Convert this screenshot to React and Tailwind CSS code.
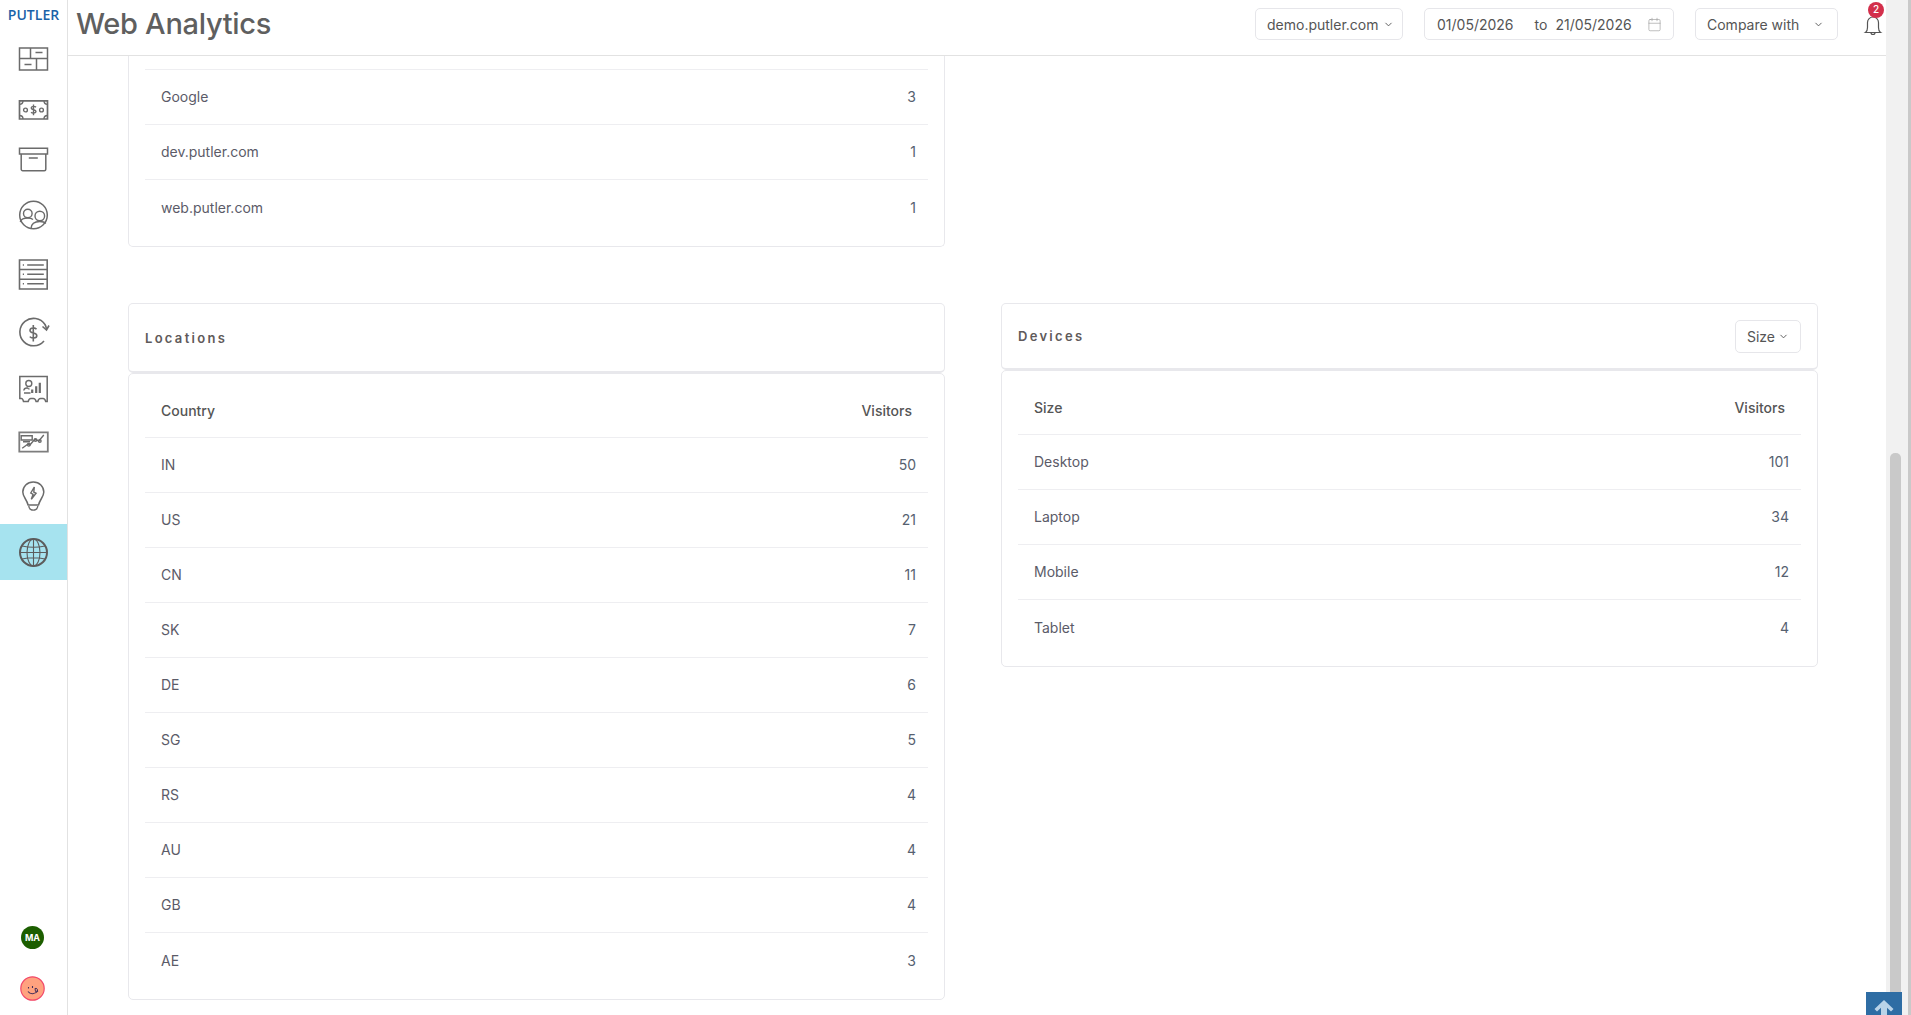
import React from "react";
import { ChevronDown, Calendar } from "lucide-react";

const font = { fontFamily: "Inter, sans-serif" };

const referrers = [
  ["Google", 3],
  ["dev.putler.com", 1],
  ["web.putler.com", 1],
];
const countries = [
  ["IN", 50],
  ["US", 21],
  ["CN", 11],
  ["SK", 7],
  ["DE", 6],
  ["SG", 5],
  ["RS", 4],
  ["AU", 4],
  ["GB", 4],
  ["AE", 3],
];
const devices = [
  ["Desktop", 101],
  ["Laptop", 34],
  ["Mobile", 12],
  ["Tablet", 4],
];

const NavIcon = ({ children, active, h }) => (
  <div className={`flex items-center justify-center ${h} ${active ? "bg-[#a6e3ef]" : ""}`}>
    <svg width="32" height="32" viewBox="0 0 32 32" fill="none" stroke="#6b6b6b" strokeWidth="1.4">
      {children}
    </svg>
  </div>
);

const Sidebar = () => (
  <aside className="w-[68px] shrink-0 border-r border-[#e2e2e2] flex flex-col bg-white">
    <div className="h-[30px] pt-[5px] text-center text-[14px] leading-[20px] font-semibold text-[#1a62a8]" style={{ fontFamily: "'Open Sans', sans-serif" }}>
      PUTLER
    </div>
    <NavIcon h="h-[57px]">
      <path d="M1.500 5h28v22h-28zM1.500 15.500h28M12.500 5v10.500M18.500 15.500V27M17.500 9.500h7M6.500 21.500h7" strokeWidth="1.500" />
    </NavIcon>
    <NavIcon h="h-[46px]">
      <path d="M1.500 6.800h28v18.200h-28z" strokeWidth="1.700" />
      <path d="M1.500 10.300c2 0 3.500-1.500 3.500-3.500M29.500 10.300c-2 0-3.500-1.500-3.500-3.500M1.500 21.500c2 0 3.500 1.500 3.500 3.500M29.500 21.500c-2 0-3.500 1.500-3.500 3.500" />
      <circle cx="7.500" cy="16" r="1.900" />
      <circle cx="23.500" cy="16" r="1.900" />
      <path d="M18 13.200c-1-1.200-4.800-1.200-4.800.8 0 2.400 4.800 1 4.800 3.400 0 2-3.900 2-4.900.8M15.500 10.500v10.800" />
    </NavIcon>
    <NavIcon h="h-[54px]">
      <path d="M1.500 4.300h28v5.700h-28zM3.200 10v15.200a1.500 1.500 0 0 0 1.500 1.500h21.600a1.500 1.500 0 0 0 1.500-1.500V10M10.800 14h9" strokeWidth="1.500" />
    </NavIcon>
    <NavIcon h="h-[58px]">
      <circle cx="15.500" cy="15" r="13.800" strokeWidth="1.500" />
      <circle cx="9.800" cy="13.500" r="4.300" />
      <circle cx="21.800" cy="16" r="4.800" />
      <path d="M2.300 22c.5-2.500 3-4 7.500-4 2.300 0 4 .5 5.200 1.500M13 28.500c.3-4.500 3.500-7 8.800-7 3 0 5 .8 6 2" />
    </NavIcon>
    <NavIcon h="h-[58px]">
      <path d="M1.500 2h27.700v29h-27.700zM1.500 11.500h27.700M1.500 21.200h27.700" strokeWidth="1.600" />
      <path d="M9.200 7h16.600M9.200 16.200h16.600M9.200 25.800h16.600" strokeWidth="1.500" />
      <path d="M4.800 7h1.200M4.800 16.200h1.200M4.800 25.800h1.200" />
    </NavIcon>
    <NavIcon h="h-[60px]">
      <path d="M26 24a13.700 13.700 0 1 1 1-16.500 13.700 13.700 0 0 1 1.500 4.500" strokeWidth="1.600" />
      <path d="M24.500 9.500l4 3.500 2.500-4.500" strokeWidth="1.600" />
      <path d="M18.500 12.300c-1.500-2-6.500-2-6.500 1.200 0 3.500 6.800 1.600 6.800 5.200 0 3-5.500 3-7 .9M15.300 8v16.500" strokeWidth="1.600" />
    </NavIcon>
    <NavIcon h="h-[52px]">
      <path d="M1.800 3.500h27.400v25h-1.500c-.5-2-1.200-3-2.700-3h-2.500c-1.500 0-2.200 1-2.700 3h-1.700c-.5-2-1.200-3-2.700-3h-2.500c-1.500 0-2.200 1-2.700 3H5.500c-.5-2-1.200-3-2-3h-1.700z" strokeWidth="1.500" />
      <circle cx="10.800" cy="10.500" r="3" />
      <path d="M6 20h6.500M5.800 17.500c.3-2 2-2.700 3.700-2.500.5.800 1 1 2 1" />
      <path d="M14.200 20v-3.500M18.200 20v-6.800M21.800 20V9.800" strokeWidth="2.200" />
    </NavIcon>
    <NavIcon h="h-[54px]">
      <path d="M1.300 6.300h28.500v19.400H1.300z" strokeWidth="1.800" stroke="#7d7d7d" />
      <path d="M3.200 9.700h11v4.300h-11zM5 15.700h7" />
      <path d="M4.200 22.300l5.800-4.300 1.800 1 5-5.700 4 1.700 5-6" />
      <circle cx="10.800" cy="18.800" r="1.300" />
      <circle cx="17.500" cy="14" r="1.300" />
      <circle cx="21.800" cy="15" r="1.300" />
    </NavIcon>
    <NavIcon h="h-[55px]">
      <path d="M15.300 1c-6.200 0-10.500 4.500-10.500 10 0 4.800 3.800 7 5.300 13h10.400c1.500-6 5.300-8.200 5.300-13 0-5.500-4.300-10-10.500-10z" strokeWidth="1.500" />
      <path d="M10.800 25c.5 5.500 8.500 5.500 9 0M16.300 6l-3.500 6 2.300 1.300-1.800 5 4.800-6-2.300-1.300z" strokeWidth="1.400" />
    </NavIcon>
    <NavIcon active h="h-[56px]">
      <circle cx="15.500" cy="16.500" r="13.500" strokeWidth="2" stroke="#5c5c5c" />
      <ellipse cx="15.500" cy="16.500" rx="6.500" ry="13.500" stroke="#5c5c5c" strokeWidth="1.100" />
      <path d="M15.500 3v27M2 16.500h27M4 10c7 1.500 16 1.500 23 0M4 23c7-1.500 16-1.500 23 0" stroke="#5c5c5c" strokeWidth="1.100" />
    </NavIcon>
    <div className="mt-auto flex flex-col items-center gap-[27px] pb-[14px] pr-[2px]">
      <div className="w-[23px] h-[23px] rounded-full bg-[#1c5e00] text-white text-[9px] font-bold flex items-center justify-center">MA</div>
      <svg width="25" height="25" viewBox="0 0 25 25">
        <circle cx="12.500" cy="12.500" r="11.700" fill="#ffa27f" stroke="#f2486a" strokeWidth="1.200" />
        <path d="M8 15.500c2 3 7 3 10-.5M8.500 11v1.500M12.500 10v2" fill="none" stroke="#44305a" strokeWidth="1.100" />
        <path d="M15 12.500c1.500-.5 3 .5 2.500 2.500l-2 .5z" fill="none" stroke="#44305a" />
      </svg>
    </div>
  </aside>
);

const Select = ({ children, className }) => (
  <div className={`h-[32px] border border-[#e6e6ea] rounded-[5px] flex items-center text-[14px] text-[#555] ${className}`}>
    {children}
  </div>
);

const Header = () => (
  <header className="h-[56px] shrink-0 border-b border-[#e2e2e2] flex items-center pl-[8px] bg-white">
    <h1 className="text-[29px] font-medium text-[#5f5f5f] tracking-[-0.3px] -mt-[8px]">Web Analytics</h1>
    <div className="ml-auto flex items-center -mt-[7px]">
      <Select className="w-[148px] pl-[11px] gap-[4px]">
        demo.putler.com <ChevronDown size={11} />
      </Select>
      <Select className="w-[250px] ml-[21px] pl-[12px]">
        <span>01/05/2026</span>
        <span className="ml-[21px]">to</span>
        <span className="ml-[8px]">21/05/2026</span>
        <Calendar size={15} strokeWidth={1} className="ml-[15px] text-[#999]" />
      </Select>
      <Select className="w-[143px] ml-[21px] pl-[11px]">
        Compare with <ChevronDown size={11} className="ml-[14px]" />
      </Select>
      <div className="relative ml-[22px] w-[26px] h-[33px] flex items-center justify-center">
        <svg width="24" height="24" viewBox="0 0 24 24" fill="none" stroke="#555" strokeWidth="1.200" className="mt-[2px]">
          <path d="M4.500 19.500c1.500-1 2-2.500 2-5V9.500a5.500 5.500 0 0 1 11 0v5c0 2.500.5 4 2 5zM10 19.500a2 2 0 0 0 4 0" />
        </svg>
        <span className="absolute -top-[6px] left-[8px] w-[16px] h-[16px] rounded-full bg-[#d32f4b] text-white text-[10px] font-medium flex items-center justify-center">2</span>
      </div>
    </div>
  </header>
);

const Row = ({ label, value, last }) => (
  <div className={`h-[55px] pb-[1px] flex items-center justify-between pl-[16px] pr-[12px] text-[14px] text-[#5b5b68] ${last ? "" : "border-b border-[#eeeef1]"}`}>
    <span>{label}</span>
    <span className="text-[#566170]">{value}</span>
  </div>
);

const TableHead = ({ label }) => (
  <div className="h-[55px] flex items-center justify-between px-[16px] border-b border-[#eeeef1] text-[14px] font-medium text-[#555]">
    <span>{label}</span>
    <span>Visitors</span>
  </div>
);

const Content = () => (
  <main className="flex-1 overflow-hidden pl-[60px] pr-[68px] grid grid-cols-2 gap-x-[56px] content-start bg-white">
    <section className="col-span-1 h-[191px] border border-t-0 border-[#e8e8ec] rounded-b-[5px] px-[16px]">
      <div className="h-[14px] border-b border-[#eeeef1]" />
      {referrers.map(([label, value], i) => (
        <Row key={label} label={label} value={value} last={i === referrers.length - 1} />
      ))}
    </section>
    <div />
    <section className="mt-[56px]">
      <div className="h-[70px] pt-[2px] border border-b-[2px] border-[#e8e8ec] rounded-[5px] flex items-center px-[16px] text-[13px] font-semibold text-[#5f5a5a] tracking-[2.3px]">
        Locations
      </div>
      <div className="border border-[#e8e8ec] rounded-[5px] px-[16px] pt-[9px] pb-[11px]">
        <TableHead label="Country" />
        {countries.map(([label, value], i) => (
          <Row key={label} label={label} value={value} last={i === countries.length - 1} />
        ))}
      </div>
    </section>
    <section className="mt-[56px] self-start">
      <div className="h-[67px] border border-b-[2px] border-[#e8e8ec] rounded-[5px] flex items-center justify-between px-[16px] text-[13px] font-semibold text-[#5f5a5a] tracking-[2.3px]">
        <span className="pt-[2px]">Devices</span>
        <div className="h-[33px] w-[66px] border border-[#e6e6ea] rounded-[5px] flex items-center justify-center gap-[3px] text-[14px] font-normal tracking-normal text-[#555]">
          Size <ChevronDown size={11} />
        </div>
      </div>
      <div className="border border-[#e8e8ec] rounded-[5px] px-[16px] pt-[9px] pb-[11px]">
        <TableHead label="Size" />
        {devices.map(([label, value], i) => (
          <Row key={label} label={label} value={value} last={i === devices.length - 1} />
        ))}
      </div>
    </section>
  </main>
);

const Scrollbar = () => (
  <div className="w-[25px] shrink-0 flex">
    <div className="w-[22px] bg-[#f1f1f1] pl-[4px] pr-[7px] pt-[453px]">
      <div className="h-full bg-[#c9c9c9] rounded-t-[5px]" />
    </div>
    <div className="w-[3px] bg-[#c9c9c9]" />
  </div>
);

export default function App() {
  return (
    <div className="relative flex w-[1911px] h-[1015px] overflow-hidden bg-white" style={font}>
      <Sidebar />
      <div className="flex-1 flex flex-col min-w-0">
        <Header />
        <Content />
      </div>
      <Scrollbar />
      <button className="absolute left-[1866px] top-[992px] w-[36px] h-[23px] bg-[#2e6da4] flex justify-center pt-[8px] overflow-hidden">
        <svg width="20" height="18" viewBox="0 0 20 18" fill="#b9d3e8" className="shrink-0">
          <path d="M10 0l9.500 9-2.500 2.500-4-3.800V18H7V7.700l-4 3.800L.5 9z" />
        </svg>
      </button>
    </div>
  );
}
